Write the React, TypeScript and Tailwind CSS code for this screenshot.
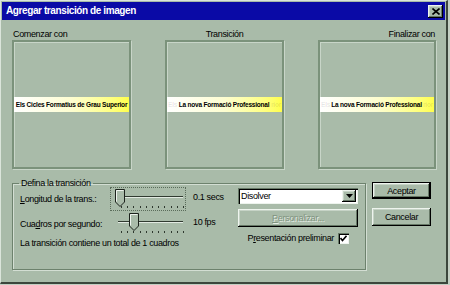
import React from 'react';

const face = 'bg-[#a9bba9]';
const btn =
  'shadow-[inset_-1px_-1px_0_#000,inset_1px_1px_0_#eef4ee,inset_-2px_-2px_0_#667866,inset_2px_2px_0_#c6d3c6]';
const sunken = 'shadow-[inset_1px_1px_0_#667866,inset_2px_2px_0_#000,inset_-1px_-1px_0_#eef4ee]';

function Slider({ thumb, track, ticks, focus }: { thumb: number; track: number; ticks: number; focus?: boolean }) {
  const xs = Array.from({ length: 11 }, (_, i) => 10 + i * 6.2);
  return (
    <div className={'w-[76px] h-[24px] ' + (focus ? 'border border-dotted border-[#5a6c5a]' : 'border border-transparent')}>
      <svg width="74" height="22" viewBox="0 0 74 22">
        <line x1="7" y1={track} x2="72" y2={track} stroke="#303a30" strokeWidth="1" />
        <line x1="7" y1={track + 1} x2="72" y2={track + 1} stroke="#e2eae2" strokeWidth="1" />
        {xs.map((x) => (
          <line key={x} x1={Math.round(x) + 0.5} y1={ticks} x2={Math.round(x) + 0.5} y2={ticks + 2} stroke="#2e382e" />
        ))}
        <path
          d={`M${thumb} 1.5 H${thumb + 9} V14 L${thumb + 4.5} 18.5 L${thumb} 14 Z`}
          fill="#a9bba9"
          stroke="#1c221c"
        />
        <path d={`M${thumb + 1} 13.5 V2.5 H${thumb + 8}`} fill="none" stroke="#eef4ee" />
      </svg>
    </div>
  );
}

function Preview({ text, ghost }: { text: string; ghost?: boolean }) {
  return (
    <div className="h-[129px] border-2 border-[#7b927b] shadow-[inset_1px_1px_0_#c8d5c8,1px_1px_0_#c8d5c8] flex flex-col justify-center">
      <div
        className={
          'h-[15px] bg-gradient-to-r from-white via-[#fdfdd0] to-[#ffff48] flex items-center font-bold text-[6.5px] tracking-[-0.2px] text-black px-[1px] ' +
          (ghost ? 'justify-between' : 'justify-center')
        }
      >
        {ghost && <span className="text-black/10">Els</span>}
        <span className="whitespace-nowrap">{text}</span>
        {ghost && <span className="text-black/10">rior</span>}
      </div>
    </div>
  );
}

export default function App() {
  return (
    <div className="w-[450px] h-[285px] bg-[#c3cfc3] font-['Liberation_Sans',Arial,sans-serif] text-[9px] tracking-[-0.35px] leading-[12px] text-black">
      <div className={`w-[448px] h-[284px] ${face} border-t border-l border-[#dbe5db] border-r-2 border-b-2 border-r-[#3c463c] border-b-[#3c463c] p-[1px]`}>
        {/* title bar */}
        <div className="h-[18px] bg-[#0a0aa6] flex items-center justify-between pl-[4px] pr-[2px]">
          <span className="text-white font-bold text-[10px] tracking-[-0.4px]">Agregar transición de imagen</span>
          <div className={`w-[15px] h-[13px] ${face} ${btn} flex items-center justify-center`}>
            <svg width="8" height="7" viewBox="0 0 8 7">
              <path d="M0.5 0.5 L7.5 6.5 M7.5 0.5 L0.5 6.5" stroke="#000" strokeWidth="1.6" />
            </svg>
          </div>
        </div>

        {/* previews */}
        <div className="pl-[10px] mt-[8px] grid grid-cols-[119px_119px_118px] gap-x-[34px]">
          <div className="h-[12px] pl-[1px]">Comenzar con</div>
          <div className="h-[12px] text-center">Transición</div>
          <div className="h-[12px] text-right pr-[1px]">Finalizar con</div>
          <Preview text="Els Cicles Formatius de Grau Superior" />
          <Preview text="La nova Formació Professional" ghost />
          <Preview text="La nova Formació Professional" ghost />
        </div>

        {/* bottom */}
        <div className="pl-[10px] mt-[8px] flex">
          <fieldset className="w-[354px] h-[93px] border border-[#6d826d] shadow-[inset_1px_1px_0_#d3ded3,1px_1px_0_#d3ded3]">
            <legend className="ml-[6px] px-[2px]">Defina la transición</legend>
            <div className="flex -mt-[3px]">
              <div className="w-[225px] pl-[7px] flex flex-col">
                <div className="h-[25px] flex items-center">
                  <span className="w-[90px]">
                    <u>L</u>ongitud de la trans.:
                  </span>
                  <Slider thumb={4.5} track={8.5} ticks={18} focus />
                  <span className="ml-[7px] -mt-[3px]">0.1 secs</span>
                </div>
                <div className="h-[24px] flex items-center">
                  <span className="w-[90px] mt-[2px]">
                    Cua<u>d</u>ros por segundo:
                  </span>
                  <Slider thumb={18.5} track={9.5} ticks={19} />
                  <span className="ml-[7px] -mt-[3px]">10 fps</span>
                </div>
                <div className="mt-[2px]">La transición contiene un total de 1 cuadros</div>
              </div>
              <div className="w-[120px] mt-[2px] flex flex-col">
                <div className={`h-[16px] bg-white flex items-center ${sunken}`}>
                  <span className="flex-1 pl-[3px]">Disolver</span>
                  <div className={`w-[14px] h-[12px] mr-[2px] ${face} ${btn} flex items-center justify-center`}>
                    <svg width="7" height="4" viewBox="0 0 7 4">
                      <path d="M0 0 H7 L3.5 4 Z" fill="#000" />
                    </svg>
                  </div>
                </div>
                <div className={`h-[18px] mt-[5px] ${btn} flex items-center justify-center text-[#7f937f] [text-shadow:1px_1px_0_#e6eee6]`}>
                  <span>
                    <u>P</u>ersonalizar...
                  </span>
                </div>
                <div className="mt-[5px] flex items-center justify-end pr-[9px] gap-[4px]">
                  <span>
                    P<u>r</u>esentación preliminar
                  </span>
                  <div className={`w-[11px] h-[11px] bg-white ${sunken} flex items-center justify-center`}>
                    <svg width="7" height="7" viewBox="0 0 7 7">
                      <path d="M0.5 3 L2.5 5.5 L6.5 0.8" fill="none" stroke="#000" strokeWidth="1.6" />
                    </svg>
                  </div>
                </div>
              </div>
            </div>
          </fieldset>
          <div className="ml-[6px] mt-[5px] w-[59px] flex flex-col">
            <div className={`h-[17px] border border-black ${btn} flex items-center justify-center`}>Aceptar</div>
            <div className={`h-[18px] mt-[9px] ${btn} flex items-center justify-center`}>Cancelar</div>
          </div>
        </div>
      </div>
    </div>
  );
}
